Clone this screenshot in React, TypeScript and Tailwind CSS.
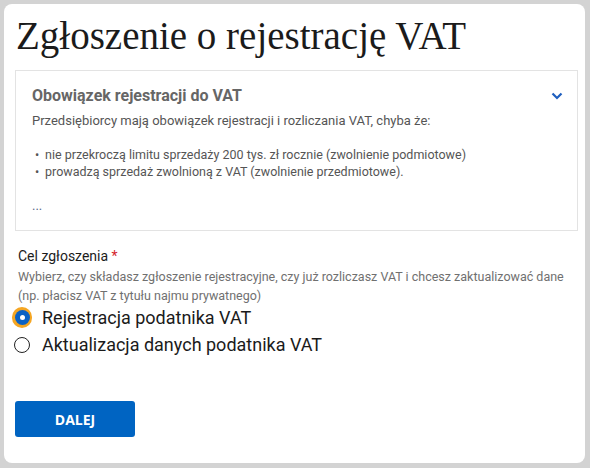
import React, { useState } from 'react';

const sans = { fontFamily: 'Roboto, "Noto Sans", sans-serif' };

function Radio({ checked, label, onSelect }: { checked: boolean; label: string; onSelect: () => void }) {
  return (
    <label className="flex items-center h-[27px] cursor-pointer -ml-[3px]" onClick={onSelect}>
      <span className="w-[20px] mr-[10px] flex items-center justify-center">
        {checked ? (
          <span className="w-[21px] h-[21px] rounded-full bg-[#f5a623] flex items-center justify-center">
            <span className="w-[15px] h-[15px] rounded-full bg-[#0b62c4] flex items-center justify-center">
              <span className="w-[5px] h-[5px] rounded-full bg-white" />
            </span>
          </span>
        ) : (
          <span className="w-[16px] h-[16px] rounded-full border-[1.5px] border-[#222] bg-white" />
        )}
      </span>
      <span className="text-[18px] text-[#1b1b1b]">{label}</span>
    </label>
  );
}

export default function App() {
  const [choice, setChoice] = useState(0);

  return (
    <div className="w-[590px] h-[468px] bg-[#d3d3d3] pt-[4px] pl-[4px]" style={sans}>
      <div className="w-[581px] h-[459px] bg-white rounded-[8px] pl-[11px] pt-[8px]">
        <h1
          className="text-[39px] leading-[48px] text-[#1b1b1b] ml-[1px]"
          style={{ fontFamily: '"Liberation Serif", "DejaVu Serif", serif' }}
        >
          Zgłoszenie o rejestrację VAT
        </h1>

        <div className="mt-[10px] w-[563px] h-[161px] border border-[#e3e3e3] px-4 pt-[13px]">
          <div className="flex items-center justify-between h-[24px] -mr-[2px]">
            <h2 className="text-[16px] font-bold text-[#666]">Obowiązek rejestracji do VAT</h2>
            <svg width="12" height="8" viewBox="0 0 12 8">
              <path d="M1.5 1.5 L6 6 L10.5 1.5" fill="none" stroke="#1f5fbf" strokeWidth="2.2" />
            </svg>
          </div>
          <div className="text-[13px] leading-[17px] text-[#555] mt-[4px]">
            <p>Przedsiębiorcy mają obowiązek rejestracji i rozliczania VAT, chyba że:</p>
            <ul className="mt-[17px] text-[12.5px]">
              <li className="flex">
                <span className="w-[10px] ml-[3px]">•</span>
                <span>nie przekroczą limitu sprzedaży 200 tys. zł rocznie (zwolnienie podmiotowe)</span>
              </li>
              <li className="flex">
                <span className="w-[10px] ml-[3px]">•</span>
                <span>prowadzą sprzedaż zwolnioną z VAT (zwolnienie przedmiotowe).</span>
              </li>
            </ul>
            <p className="mt-[17px] text-[#5a6a8a]">...</p>
          </div>
        </div>

        <div className="mt-[15px]">
          <div className="text-[14px] leading-[20px] text-[#1b1b1b] ml-[3px]">
            Cel zgłoszenia <span className="text-[#d4232b]">*</span>
          </div>
          <p className="text-[12.5px] leading-[19px] text-[#707070] ml-[3px] mt-[1px] whitespace-nowrap">
            Wybierz, czy składasz zgłoszenie rejestracyjne, czy już rozliczasz VAT i chcesz zaktualizować dane
            <br />
            (np. płacisz VAT z tytułu najmu prywatnego)
          </p>
          <div className="-mt-[1px]">
            <Radio checked={choice === 0} label="Rejestracja podatnika VAT" onSelect={() => setChoice(0)} />
            <Radio checked={choice === 1} label="Aktualizacja danych podatnika VAT" onSelect={() => setChoice(1)} />
          </div>
        </div>

        <button
          className="mt-[43px] w-[120px] h-[36px] rounded-[3px] bg-[#0064c2] text-white text-[14px] font-bold"
          style={{ fontFamily: '"Open Sans", sans-serif' }}
        >
          DALEJ
        </button>
      </div>
    </div>
  );
}
